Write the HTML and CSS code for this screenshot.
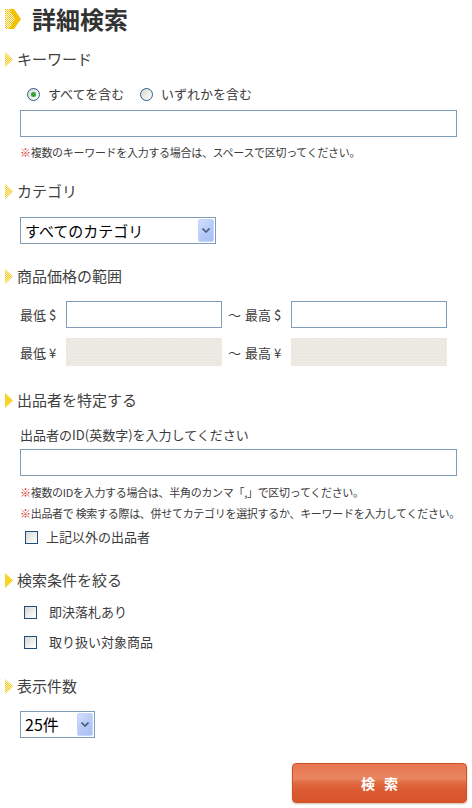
FILE: index.html
```html
<!DOCTYPE html>
<html lang="ja">
<head>
<meta charset="utf-8">
<title>詳細検索</title>
<link rel="stylesheet" href="styles.css">
</head>
<body>
<svg class="defs" width="0" height="0" aria-hidden="true">
  <defs>
    <pattern id="dither" width="2" height="2" patternUnits="userSpaceOnUse">
      <rect width="2" height="2" fill="#fdf2c0"/>
      <rect width="1" height="1" fill="#f4c81c"/>
      <rect x="1" y="1" width="1" height="1" fill="#f4c81c"/>
    </pattern>
    <pattern id="dither-strong" width="2" height="2" patternUnits="userSpaceOnUse">
      <rect width="2" height="2" fill="#fbe04e"/>
      <rect width="1" height="1" fill="#f6c800"/>
      <rect x="1" y="1" width="1" height="1" fill="#f6c800"/>
    </pattern>
    <pattern id="dither-title" width="2" height="2" patternUnits="userSpaceOnUse">
      <rect width="2" height="2" fill="#fff"/>
      <rect width="1" height="1" fill="#f4c000"/>
      <rect x="1" y="1" width="1" height="1" fill="#f4c000"/>
    </pattern>
  </defs>
</svg>
<div class="page">
  <h1 class="title">
    <svg class="title-arrow" width="16" height="20" viewBox="0 0 16 20">
      <path d="M0 0 H5 L11 10 L5 20 H0 Z" fill="url(#dither-title)"/>
      <path d="M4 0 H9 L16 10 L9 20 H4 L10 10 Z" fill="#f4c000"/>
    </svg>
    <span>詳細検索</span>
  </h1>

  <h2 class="sec-head sh-keyword">
    <svg class="tri" width="8" height="15" viewBox="0 0 8 15"><path d="M0 0 L8 7.5 L0 15 Z" fill="url(#dither)"/></svg>
    キーワード
  </h2>
  <div class="radios">
    <label class="radio radio-first"><span class="rb rb-on"></span>すべてを含む</label>
    <label class="radio"><span class="rb"></span>いずれかを含む</label>
  </div>
  <div class="indent kw-row"><input class="field field-wide" type="text"></div>
  <p class="note note-kw"><span class="kome">※</span>複数のキーワードを入力する場合は、スペースで区切ってください。</p>

  <h2 class="sec-head sh-cat">
    <svg class="tri" width="8" height="15" viewBox="0 0 8 15"><path d="M0 0 L8 7.5 L0 15 Z" fill="url(#dither)"/></svg>
    カテゴリ
  </h2>
  <div class="indent sel-cat-row">
    <div class="select select-cat">
      <span class="select-text">すべてのカテゴリ</span>
      <span class="select-btn"><svg width="8" height="5" viewBox="0 0 8 5"><path d="M0.5 0.5 L4 4 L7.5 0.5" fill="none" stroke="#4a5d80" stroke-width="1.6"/></svg></span>
    </div>
  </div>

  <h2 class="sec-head sh-price">
    <svg class="tri" width="8" height="15" viewBox="0 0 8 15"><path d="M0 0 L8 7.5 L0 15 Z" fill="url(#dither)"/></svg>
    商品価格の範囲
  </h2>
  <div class="price-row price-usd">
    <span class="price-label">最低 $</span>
    <input class="field price-field" type="text">
    <span class="price-sep">〜</span>
    <span class="price-label">最高 $</span>
    <input class="field price-field" type="text">
  </div>
  <div class="price-row price-yen">
    <span class="price-label">最低 ¥</span>
    <span class="price-disabled"></span>
    <span class="price-sep">〜</span>
    <span class="price-label">最高 ¥</span>
    <span class="price-disabled"></span>
  </div>

  <h2 class="sec-head sh-seller">
    <svg class="tri" width="8" height="15" viewBox="0 0 8 15"><path d="M0 0 L8 7.5 L0 15 Z" fill="url(#dither-strong)"/></svg>
    出品者を特定する
  </h2>
  <p class="id-label">出品者のID(英数字)を入力してください</p>
  <div class="indent id-field-row"><input class="field field-wide" type="text"></div>
  <p class="note note-id1"><span class="kome">※</span>複数のIDを入力する場合は、半角のカンマ「,」で区切ってください。</p>
  <p class="note note-id2"><span class="kome">※</span>出品者で 検索する際は、併せてカテゴリを選択するか、キーワードを入力してください。</p>
  <label class="check check-other"><span class="cb"></span>上記以外の出品者</label>

  <h2 class="sec-head sh-filter">
    <svg class="tri" width="8" height="15" viewBox="0 0 8 15"><path d="M0 0 L8 7.5 L0 15 Z" fill="url(#dither-strong)"/></svg>
    検索条件を絞る
  </h2>
  <label class="check check-filter check-f1"><span class="cb"></span>即決落札あり</label>
  <label class="check check-filter check-f2"><span class="cb"></span>取り扱い対象商品</label>

  <h2 class="sec-head sh-count">
    <svg class="tri" width="8" height="15" viewBox="0 0 8 15"><path d="M0 0 L8 7.5 L0 15 Z" fill="url(#dither)"/></svg>
    表示件数
  </h2>
  <div class="indent sel-count-row">
    <div class="select select-count">
      <span class="select-text select-text-count">25件</span>
      <span class="select-btn"><svg width="8" height="5" viewBox="0 0 8 5"><path d="M0.5 0.5 L4 4 L7.5 0.5" fill="none" stroke="#4a5d80" stroke-width="1.6"/></svg></span>
    </div>
  </div>

  <div class="actions">
    <button class="search-btn" type="button">検 索</button>
  </div>
</div>
</body>
</html>
```

FILE: styles.css
```css
* { box-sizing: border-box; }

body {
  margin: 0;
  background: #fff;
  color: #3c3c3c;
  font-family: "Noto Sans CJK JP", "Noto Sans", "Liberation Sans", sans-serif;
}

.defs { display: block; width: 0; height: 0; overflow: hidden; }

.page {
  width: 472px;
  padding-bottom: 5px;
}

/* title */
.title {
  margin: 0;
  height: 38px;
  display: flex;
  align-items: center;
  gap: 11px;
  padding-left: 5px;
  font-size: 24px;
  line-height: 38px;
  font-weight: bold;
  color: #333;
}
.title-arrow { display: block; flex: none; }

/* section heads */
.sec-head {
  margin: 0;
  height: 20px;
  display: flex;
  align-items: center;
  gap: 4px;
  padding-left: 5px;
  font-size: 15px;
  line-height: 20px;
  font-weight: normal;
  color: #404040;
}
.tri { display: block; flex: none; }

.sh-keyword { margin-top: 11px; }
.sh-cat { margin-top: 22px; }
.sh-price { margin-top: 22px; }
.sh-seller { margin-top: 24px; }
.sh-filter { margin-top: 24px; }
.sh-count { margin-top: 25px; }

.indent { padding-left: 20px; }

/* radios */
.radios {
  margin-top: 15px;
  height: 20px;
  display: flex;
  align-items: center;
  padding-left: 27px;
  font-size: 13px;
  line-height: 20px;
}
.radio {
  display: flex;
  align-items: center;
  gap: 8px;
}
.radio-first { width: 113px; }
.rb {
  width: 13px;
  height: 13px;
  border-radius: 50%;
  border: 1px solid #2d5c8c;
  background: linear-gradient(135deg, #d6d5cf, #f4f4f1 70%, #fff);
  display: flex;
  align-items: center;
  justify-content: center;
  flex: none;
}
.rb-on::after {
  content: "";
  width: 5px;
  height: 5px;
  border-radius: 50%;
  background: #31a531;
}

/* inputs */
.field {
  display: block;
  margin: 0;
  padding: 0 4px;
  height: 27px;
  border: 1px solid #7f9db9;
  background: #fff;
  font: inherit;
  outline: none;
  -webkit-appearance: none;
  appearance: none;
  border-radius: 0;
}
.field-wide { width: 437px; }
.kw-row { margin-top: 6px; }

/* notes */
.note {
  margin: 0;
  padding-left: 20px;
  font-size: 11px;
  line-height: 14px;
  letter-spacing: -0.3px;
  color: #3c3c3c;
  white-space: nowrap;
}
.kome { color: #d0342c; }
.note-kw { margin-top: 8px; }
.note-id1 { margin-top: 9px; }
.note-id2 { margin-top: 7px; }

/* selects */
.select {
  display: flex;
  align-items: center;
  height: 27px;
  border: 1px solid #7f9db9;
  background: #fff;
  padding: 1px;
}
.select-cat { width: 196px; }
.select-count { width: 75px; }
.select-text {
  flex: 1;
  padding-left: 3px;
  font-size: 15px;
  line-height: 23px;
  color: #000;
  white-space: nowrap;
}
.select-text-count { font-size: 16px; }
.select-btn {
  flex: none;
  width: 16px;
  height: 23px;
  border: 1px solid #c3d3fd;
  border-radius: 2px;
  background: linear-gradient(135deg, #d2defc, #b4c8f6 60%, #a9c0f2);
  display: flex;
  align-items: center;
  justify-content: center;
}
.select-btn svg { display: block; }
.sel-cat-row { margin-top: 16px; }
.sel-count-row { margin-top: 15px; }

/* price */
.price-row {
  display: flex;
  align-items: center;
  padding-left: 20px;
  font-size: 13px;
}
.price-usd { margin-top: 15px; height: 27px; }
.price-yen { margin-top: 10px; height: 28px; }
.price-label { width: 46px; flex: none; white-space: nowrap; }
.price-field { width: 156px; flex: none; }
.price-sep { width: 23px; padding-left: 6px; flex: none; }
.price-disabled {
  width: 156px;
  height: 28px;
  flex: none;
  background-color: #ecebe4;
  background-image: radial-gradient(circle at 1px 1px, #e4e2da 0.6px, transparent 0.8px);
  background-size: 3px 3px;
}

/* seller */
.id-label {
  margin: 17px 0 0;
  padding-left: 20px;
  font-size: 13px;
  line-height: 16px;
}
.id-field-row { margin-top: 6px; }

/* checkboxes */
.check {
  display: flex;
  align-items: center;
  height: 18px;
  font-size: 13px;
  line-height: 18px;
}
.cb {
  width: 13px;
  height: 13px;
  flex: none;
  border: 1px solid #1f4f82;
  background: linear-gradient(135deg, #d8d8d2, #f3f3ef 65%, #fff);
}
.check-other { margin-top: 8px; padding-left: 25px; gap: 8px; }
.check-filter { padding-left: 24px; gap: 12px; }
.check-f1 { margin-top: 13px; }
.check-f2 { margin-top: 12px; }

/* button */
.actions {
  margin-top: 25px;
  display: flex;
  justify-content: flex-end;
  padding-right: 5px;
}
.search-btn {
  width: 175px;
  height: 40px;
  margin: 0;
  border: 1px solid #cf4f27;
  border-radius: 4px;
  background: linear-gradient(#e7774f 0%, #ea8562 38%, #e06a41 50%, #db5a31 70%, #d9542b 100%);
  box-shadow: 0 1px 2px rgba(120, 60, 30, 0.35);
  color: #fff;
  font-family: inherit;
  font-size: 14px;
  font-weight: bold;
  letter-spacing: 3px;
  text-indent: 3px;
  cursor: pointer;
}
```
